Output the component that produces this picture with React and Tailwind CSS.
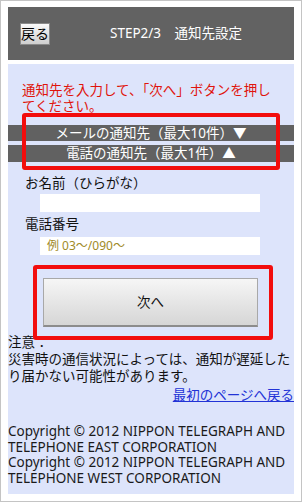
const font = { fontFamily: '"Noto Sans", "Noto Sans CJK JP", sans-serif' };

const App = () => {
  return (
    <div
      className="w-[302px] h-[502px] bg-white border border-[#c4c4c4] pt-[6px] px-[7px] text-[13.5px] text-[#111]"
      style={font}
    >
      {/* header */}
      <div className="h-[53px] bg-[#626262] flex items-center pl-[12px]">
        <button className="w-[30px] h-[22px] border border-[#8a8a8a] bg-gradient-to-b from-[#fafafa] to-[#cfcfcf] text-[14px] leading-none text-black flex items-center justify-center">
          戻る
        </button>
        <div className="ml-[60px] text-white text-[13.5px]">STEP2/3　通知先設定</div>
      </div>

      {/* panel */}
      <div className="mt-[4px] h-[430px] bg-[#dde4fb] relative">
        <p className="pt-[18px] px-[14px] text-[#e0140c] leading-[16px]">
          通知先を入力して、「次へ」ボタンを押してください。
        </p>

        {/* accordion bars */}
        <div className="mt-[11px]">
          <div className="h-[16px] bg-[#616161] text-white text-[13.5px] leading-[16px] text-center">
            メールの通知先（最大10件）▼
          </div>
          <div className="mt-[4px] h-[17px] bg-[#616161] text-white text-[13.5px] leading-[17px] text-center">
            電話の通知先（最大1件）▲
          </div>
        </div>
        <div className="absolute left-[14px] top-[49px] w-[258px] h-[57px] border-[4px] border-[#f20d0d] rounded-[3px]" />

        {/* form */}
        <div className="mt-[13px] pl-[17px] leading-[17px]">お名前（ひらがな）</div>
        <div className="mt-[2px] ml-[32px] w-[220px] h-[18px] bg-white" />
        <div className="mt-[4px] pl-[17px] leading-[17px]">電話番号</div>
        <div className="mt-[4px] ml-[32px] w-[220px] h-[18px] bg-white pl-[7px] text-[12px] leading-[18px] text-[#a08a28]">
          例 03〜/090〜
        </div>

        {/* next button */}
        <div className="mt-[23px] ml-[35px] w-[215px] h-[49px] border border-[#a8a8a8] border-b-[2px] border-b-[#8c8c8c] bg-gradient-to-b from-[#f6f6f6] to-[#d6d6d6] flex items-center justify-center">
          次へ
        </div>
        <div className="absolute left-[25px] top-[201px] w-[240px] h-[75px] border-[4px] border-[#f20d0d] rounded-[3px]" />

        {/* note */}
        <div className="mt-[7px] leading-[17px]">
          <div>注意：</div>
          <div>災害時の通信状況によっては、通知が遅延したり届かない可能性があります。</div>
        </div>
        <div className="mt-[2px] text-right leading-[17px]">
          <a href="#" className="text-[#2233d6] underline">最初のページへ戻る</a>
        </div>

        {/* copyright */}
        <div className="mt-[20px] leading-[15.7px] text-[#1a1a1a]">
          <div>Copyright © 2012 NIPPON TELEGRAPH AND TELEPHONE EAST CORPORATION</div>
          <div>Copyright © 2012 NIPPON TELEGRAPH AND TELEPHONE WEST CORPORATION</div>
        </div>
      </div>
    </div>
  );
};

export default App;
